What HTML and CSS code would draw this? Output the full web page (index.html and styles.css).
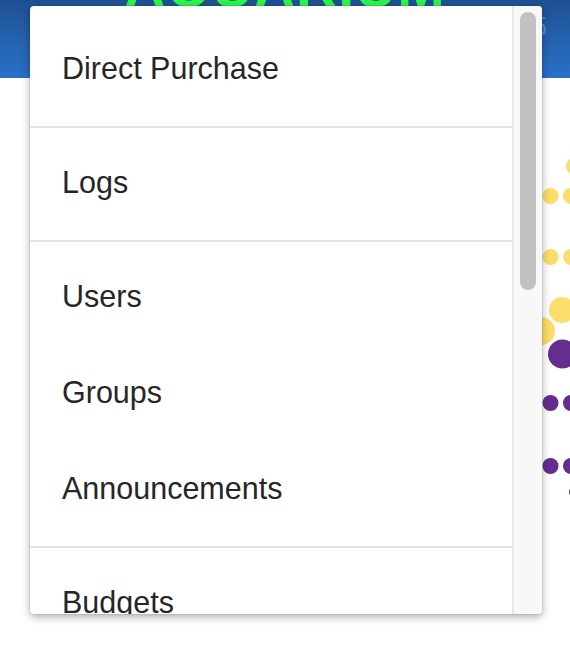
FILE: index.html
```html
<!DOCTYPE html>
<html lang="en">
<head>
<meta charset="utf-8">
<title>Menu</title>
<link rel="stylesheet" href="styles.css">
</head>
<body>
<div class="page">
  <header class="topbar">
    <span class="spacer"></span>
    <h1 class="brand">AQUARIUM</h1>
    <span class="badge">5</span>
  </header>
  <main class="content">
    <svg class="chart" width="50" height="370" viewBox="0 0 50 370" aria-hidden="true">
      <circle cx="54" cy="26" r="8" fill="#fbdd6a"/>
      <circle cx="30.5" cy="56" r="8" fill="#fbdd6a"/>
      <circle cx="51" cy="56" r="8" fill="#fbdd6a"/>
      <circle cx="30.5" cy="117" r="8" fill="#fbdd6a"/>
      <circle cx="51" cy="117" r="8" fill="#fbdd6a"/>
      <circle cx="21" cy="191" r="14" fill="#fbdd6a"/>
      <circle cx="42" cy="170" r="13" fill="#fbdd6a"/>
      <circle cx="42.5" cy="214" r="14.5" fill="#652d8e"/>
      <circle cx="30.5" cy="263" r="8" fill="#652d8e"/>
      <circle cx="51" cy="263" r="8" fill="#652d8e"/>
      <circle cx="30.5" cy="326" r="8" fill="#652d8e"/>
      <circle cx="51" cy="326" r="8" fill="#652d8e"/>
      <circle cx="55" cy="352" r="6" fill="#652d8e"/>
    </svg>
  </main>

  <nav class="menu">
    <div class="menu-list">
      <div class="menu-group first">
        <div class="menu-item">Direct Purchase</div>
      </div>
      <div class="menu-group">
        <div class="menu-item">Logs</div>
      </div>
      <div class="menu-group">
        <div class="menu-item">Users</div>
        <div class="menu-item">Groups</div>
        <div class="menu-item">Announcements</div>
      </div>
      <div class="menu-group">
        <div class="menu-item">Budgets</div>
      </div>
    </div>
    <div class="scrollbar">
      <div class="thumb"></div>
    </div>
  </nav>
</div>
</body>
</html>
```

FILE: styles.css
```css
html, body {
  margin: 0;
  padding: 0;
  background: #ffffff;
}

body {
  font-family: "Liberation Sans", Arial, sans-serif;
  width: 570px;
  height: 646px;
  overflow: hidden;
}

.page {
  position: relative;
  width: 570px;
  height: 646px;
}

.topbar {
  height: 78px;
  background: linear-gradient(to bottom, #1e5090 0%, #2565b4 60%, #2a6fc8 100%);
  display: grid;
  grid-template-columns: 1fr auto 1fr;
  align-items: start;
  overflow: hidden;
}

.brand {
  margin: -41px 0 0 0;
  font-size: 57px;
  line-height: 57px;
  font-weight: bold;
  color: #2ef54b;
  letter-spacing: 1px;
}

.badge {
  justify-self: end;
  margin: 12px 23px 0 0;
  font-size: 27px;
  line-height: 30px;
  color: #4a8ad6;
}

.content {
  display: flex;
  justify-content: flex-end;
}

.chart {
  display: block;
  margin-top: 62px;
  overflow: hidden;
}

.menu {
  position: absolute;
  left: 30px;
  top: 6px;
  width: 512px;
  height: 608px;
  background: #ffffff;
  border-radius: 4px;
  overflow: hidden;
  display: flex;
  box-shadow: 0 0 0 1px rgba(0, 0, 0, 0.06), 0 3px 9px rgba(0, 0, 0, 0.32);
}

.menu-list {
  flex: 1;
  overflow: hidden;
}

.menu-group {
  padding: 8px 0;
  border-bottom: 2px solid #e4e4e4;
}

.menu-group.first {
  padding-top: 16px;
}

.menu-item {
  height: 93px;
  padding: 0 0 3px 32px;
  line-height: 93px;
  font-size: 30.5px;
  color: #262626;
  white-space: nowrap;
}

.scrollbar {
  width: 30px;
  padding: 6px 6px 0 6px;
  box-sizing: border-box;
  background: #f8f8f8;
  border-left: 2px solid #e8e8e8;
}

.thumb {
  width: 16px;
  height: 278px;
  border-radius: 8px;
  background: #c1c1c1;
}
```
